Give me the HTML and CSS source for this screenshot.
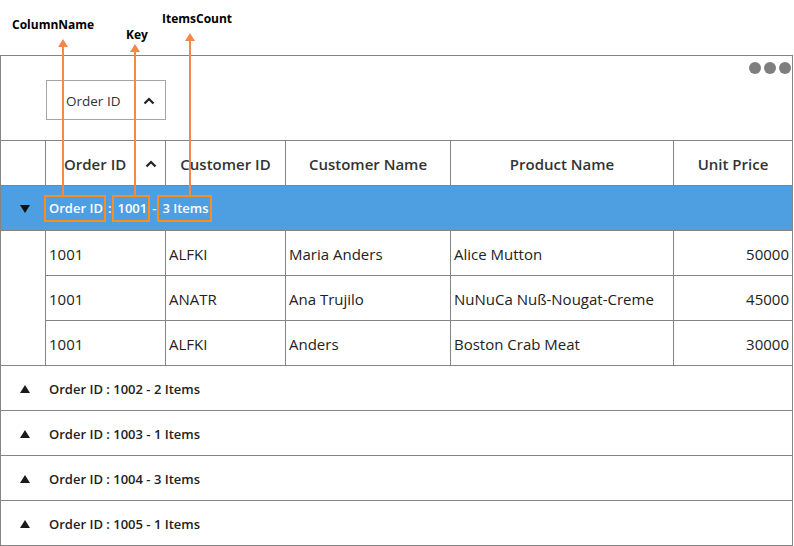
FILE: index.html
```html
<!DOCTYPE html>
<html lang="en">
<head>
    <meta charset="UTF-8">
    <title>Grouping caption</title>
    <link rel="stylesheet" href="styles.css">
</head>
<body>
    <div class="page">
        <div class="grid">
            <div class="group-area">
                <div class="group-chip">
                    <span>Order ID</span>
                    <svg class="caret" width="12" height="8" viewBox="0 0 12 8"><path d="M1.5 6.5 L6 2 L10.5 6.5" fill="none" stroke="#222" stroke-width="2.2"/></svg>
                </div>
                <div class="dots"><i></i><i></i><i></i></div>
            </div>

            <div class="row header">
                <div class="cell indent"></div>
                <div class="cell sorted">
                    <span>Order ID</span>
                    <svg class="caret" width="12" height="8" viewBox="0 0 12 8"><path d="M1.5 6.5 L6 2 L10.5 6.5" fill="none" stroke="#222" stroke-width="2.2"/></svg>
                </div>
                <div class="cell">Customer ID</div>
                <div class="cell">Customer Name</div>
                <div class="cell">Product Name</div>
                <div class="cell">Unit Price</div>
            </div>

            <div class="caption open">
                <svg class="toggle" width="10" height="8" viewBox="0 0 10 8"><polygon points="0,0 10,0 5,8" fill="#111"/></svg>
                <span class="caption-text"><span class="mark">Order ID</span><span class="sep">:</span><span class="mark">1001</span><span class="sep">-</span><span class="mark">3 Items</span></span>
            </div>

            <div class="records">
                <div class="indent-col"></div>
                <div class="rows">
                    <div class="row data">
                        <div class="cell">1001</div>
                        <div class="cell">ALFKI</div>
                        <div class="cell">Maria Anders</div>
                        <div class="cell">Alice Mutton</div>
                        <div class="cell num">50000</div>
                    </div>
                    <div class="row data">
                        <div class="cell">1001</div>
                        <div class="cell">ANATR</div>
                        <div class="cell">Ana Trujilo</div>
                        <div class="cell">NuNuCa Nuß-Nougat-Creme</div>
                        <div class="cell num">45000</div>
                    </div>
                    <div class="row data">
                        <div class="cell">1001</div>
                        <div class="cell">ALFKI</div>
                        <div class="cell">Anders</div>
                        <div class="cell">Boston Crab Meat</div>
                        <div class="cell num">30000</div>
                    </div>
                </div>
            </div>

            <div class="caption"><svg class="toggle" width="10" height="8" viewBox="0 0 10 8"><polygon points="0,8 10,8 5,0" fill="#1a1a1a"/></svg><span class="caption-text">Order ID : 1002 - 2 Items</span></div>
            <div class="caption"><svg class="toggle" width="10" height="8" viewBox="0 0 10 8"><polygon points="0,8 10,8 5,0" fill="#1a1a1a"/></svg><span class="caption-text">Order ID : 1003 - 1 Items</span></div>
            <div class="caption"><svg class="toggle" width="10" height="8" viewBox="0 0 10 8"><polygon points="0,8 10,8 5,0" fill="#1a1a1a"/></svg><span class="caption-text">Order ID : 1004 - 3 Items</span></div>
            <div class="caption"><svg class="toggle" width="10" height="8" viewBox="0 0 10 8"><polygon points="0,8 10,8 5,0" fill="#1a1a1a"/></svg><span class="caption-text">Order ID : 1005 - 1 Items</span></div>
        </div>

        <!-- callouts drawn over the grid -->
        <span class="label label-column">ColumnName</span>
        <span class="label label-key">Key</span>
        <span class="label label-count">ItemsCount</span>
        <svg class="arrows" width="794" height="200" viewBox="0 0 794 200">
            <g stroke="#f5874a" stroke-width="2">
                <line x1="63" y1="46" x2="63" y2="196"/>
                <line x1="135" y1="51" x2="135" y2="196"/>
                <line x1="190" y1="40" x2="190" y2="196"/>
            </g>
            <g fill="#f5874a">
                <polygon points="63,39 58,47 68,47"/>
                <polygon points="135,44 130,52 140,52"/>
                <polygon points="190,33 185,41 195,41"/>
            </g>
        </svg>
    </div>
</body>
</html>
```

FILE: styles.css
```css
:root {
    --line: #848484;
    --text: #262626;
    --blue: #4d9fe2;
    --orange: #f7901e;
}

body {
    margin: 0;
    background: white;
    font-family: 'Open Sans', 'Noto Sans', sans-serif;
    color: var(--text);
}

.page {
    position: relative;
    width: 794px;
    height: 546px;
    padding-top: 55px;
    box-sizing: border-box;
}

.grid {
    width: 793px;
    border: 1px solid var(--line);
    border-right: none;
    box-sizing: border-box;
}

.group-area {
    position: relative;
    height: 85px;
    border-bottom: 1px solid var(--line);
    border-right: 1px solid var(--line);
    box-sizing: border-box;
    padding: 24px 0 0 45px;
}

.group-chip {
    width: 120px;
    height: 40px;
    box-sizing: border-box;
    border: 1px solid #a6a6a6;
    display: flex;
    align-items: center;
    justify-content: space-between;
    padding: 1px 10px 0 19px;
    font-size: 13.5px;
    color: #333;
}

.dots {
    position: absolute;
    top: 6px;
    right: 1px;
    display: flex;
    gap: 3px;
}

.dots i {
    width: 12px;
    height: 12px;
    border-radius: 50%;
    background: #7e7e7e;
}

.row {
    display: grid;
    grid-template-columns: 45px 120px 120px 165px 223px 119px;
    height: 45px;
}

.cell {
    border-right: 1px solid var(--line);
    border-bottom: 1px solid var(--line);
    box-sizing: border-box;
    display: flex;
    align-items: center;
    font-size: 15px;
    padding: 2px 3px 0;
    white-space: nowrap;
}

.header .cell {
    justify-content: center;
    font-weight: 600;
    color: #333;
}

.header .sorted {
    justify-content: space-between;
    padding: 2px 8px 0 18px;
}

.caption {
    height: 45px;
    border-bottom: 1px solid var(--line);
    border-right: 1px solid var(--line);
    box-sizing: border-box;
    display: flex;
    align-items: center;
    padding-top: 1px;
    font-size: 13px;
    font-weight: 600;
    color: #222;
}

.caption.open {
    background: var(--blue);
    color: white;
}

.toggle {
    margin: 0 19px 0 19px;
    flex: none;
}

.caption.open .toggle {
    margin-right: 14px;
}

.caption-text {
    white-space: pre;
}

.mark {
    display: inline-block;
    border: 2px solid var(--orange);
    padding: 2px 1px 3px 3px;
}

.sep {
    margin: 0 1px 0 2px;
}

.records {
    display: flex;
}

.indent-col {
    width: 45px;
    border-right: 1px solid var(--line);
    border-bottom: 1px solid var(--line);
    box-sizing: border-box;
}

.rows .row {
    grid-template-columns: 120px 120px 165px 223px 119px;
}

.data .cell {
    color: #222;
}

.num {
    justify-content: flex-end;
}

.label {
    position: absolute;
    font-size: 12px;
    font-weight: 700;
    color: #000;
}

.label-column { left: 12px; top: 16px; }
.label-key { left: 126px; top: 26px; }
.label-count { left: 162px; top: 10px; }

.arrows {
    position: absolute;
    left: 0;
    top: 0;
}
```
